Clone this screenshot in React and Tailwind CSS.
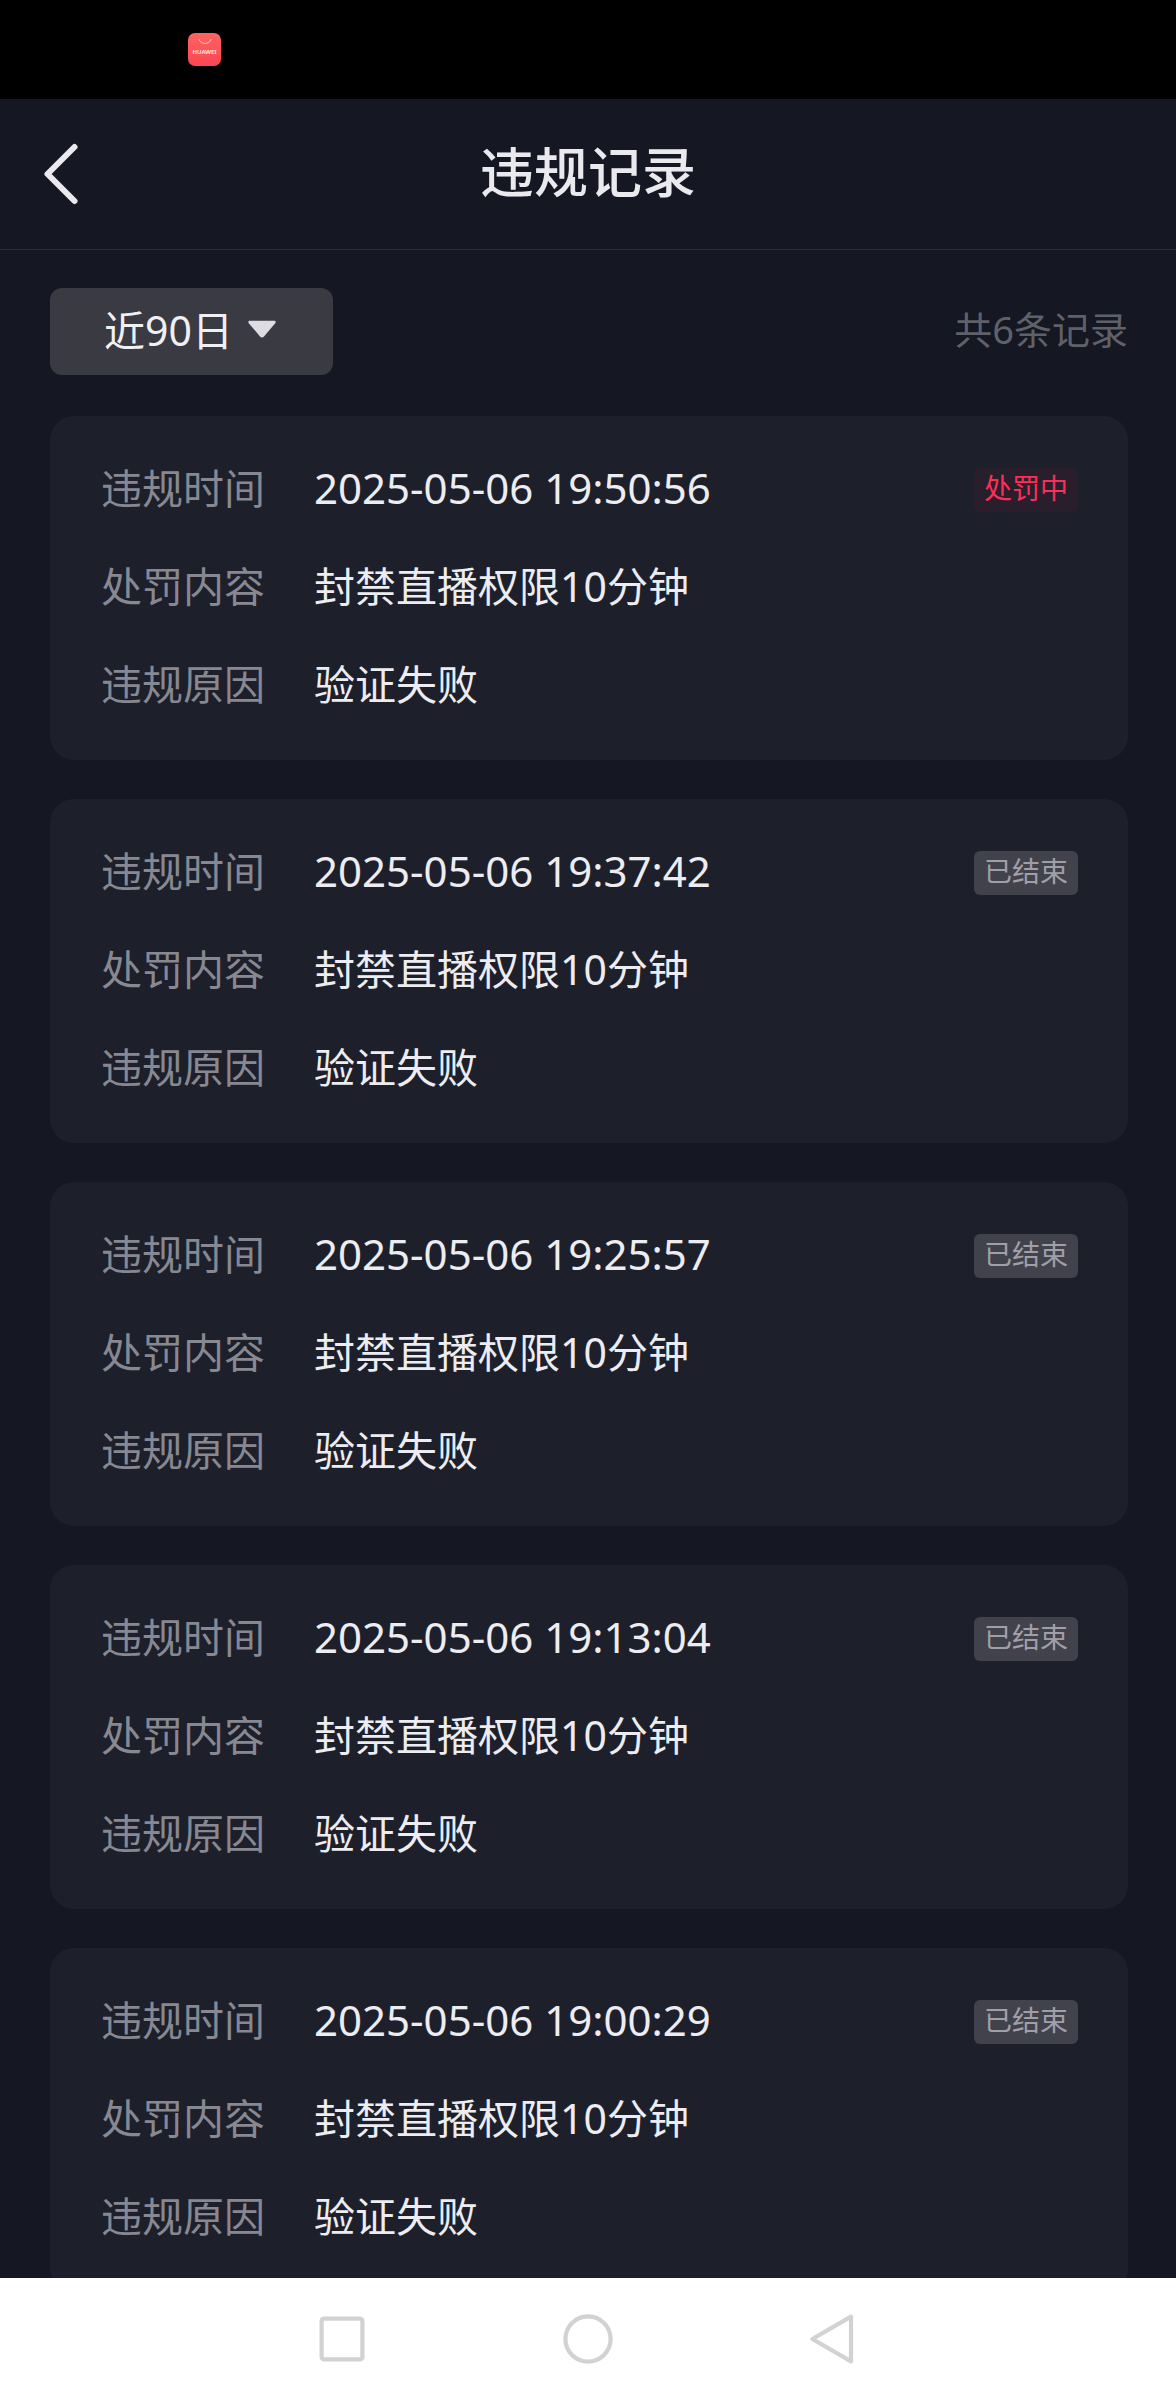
import React from "react";

const records = [
  { time: "2025-05-06 19:50:56", content: "封禁直播权限10分钟", reason: "验证失败", active: true },
  { time: "2025-05-06 19:37:42", content: "封禁直播权限10分钟", reason: "验证失败", active: false },
  { time: "2025-05-06 19:25:57", content: "封禁直播权限10分钟", reason: "验证失败", active: false },
  { time: "2025-05-06 19:13:04", content: "封禁直播权限10分钟", reason: "验证失败", active: false },
  { time: "2025-05-06 19:00:29", content: "封禁直播权限10分钟", reason: "验证失败", active: false },
];

function StatusBar() {
  return (
    <div className="flex h-[99px] shrink-0 items-center bg-black pl-[188px]">
      <div className="flex h-[33px] w-[33px] flex-col items-center rounded-[7px] bg-linear-to-b from-[#ff6361] to-[#fc4553] pt-[6px]">
        <svg width="14" height="6" viewBox="0 0 14 6" fill="none" aria-hidden="true">
          <path d="M1 0.5C2.4 5.8 11.6 5.8 13 0.5" stroke="#ffc4c0" strokeWidth="1" strokeLinecap="round" />
        </svg>
        <span className="mt-[3px] text-[6px] leading-[8px] font-semibold text-[#ffeceb]">HUAWEI</span>
      </div>
    </div>
  );
}

function Header() {
  return (
    <header className="grid h-[151px] shrink-0 grid-cols-[1fr_auto_1fr] items-center border-b border-[#2a2c36] px-[40px]">
      <button type="button" aria-label="返回" className="justify-self-start">
        <svg width="40" height="64" viewBox="0 0 40 64" fill="none" aria-hidden="true">
          <path d="M34.5 5L7.5 32L34.5 59" stroke="#e9e9ee" strokeWidth="6" strokeLinecap="round" strokeLinejoin="round" />
        </svg>
      </button>
      <h1 className="pb-[4px] text-[54px] leading-[72px] font-medium text-[#e9e9ee]">违规记录</h1>
    </header>
  );
}

function Filter() {
  return (
    <div className="flex items-center justify-between">
      <div className="relative">
        <select
          aria-label="时间范围"
          defaultValue="90"
          className="h-[87px] w-[283px] appearance-none rounded-[12px] bg-[#3a3a43] pb-[4px] pl-[54px] text-[41px] leading-[60px] text-[#f0f0f4]"
        >
          <option value="90">近90日</option>
        </select>
        <svg
          className="pointer-events-none absolute top-[32px] right-[57px]"
          width="28"
          height="18"
          viewBox="0 0 28 18"
          aria-hidden="true"
        >
          <path d="M2 0.8H26C27.6 0.8 28.2 2 27.2 3.2L16 16.4C14.8 17.8 13.2 17.8 12 16.4L0.8 3.2C-0.2 2 0.4 0.8 2 0.8Z" fill="#dcdce1" />
        </svg>
      </div>
      <p className="pb-[6px] text-[38px] leading-[60px] text-[#5f616a]">共6条记录</p>
    </div>
  );
}

function Row({ label, children }) {
  return (
    <div className="flex items-center">
      <dt className="w-[213px] shrink-0 text-[#878892]">{label}</dt>
      <dd className="flex grow items-center justify-between text-[#ececf1]">{children}</dd>
    </div>
  );
}

function Badge({ active }) {
  return active ? (
    <span className="mt-[4px] rounded-[6px] bg-[#291e2c] px-[10px] pb-[3px] text-[28px] leading-[41px] text-[#f92f58]">处罚中</span>
  ) : (
    <span className="mt-[4px] rounded-[6px] bg-[#42424c] px-[10px] pb-[3px] text-[28px] leading-[41px] text-[#a09fa8]">已结束</span>
  );
}

function RecordCard({ record }) {
  return (
    <li className="rounded-[24px] bg-[#1d202b] pt-[42px] pr-[50px] pb-[46px] pl-[51px]">
      <dl className="flex flex-col gap-[38px] text-[41px] leading-[60px]">
        <Row label="违规时间">
          <time className="text-[42px]">{record.time}</time>
          <Badge active={record.active} />
        </Row>
        <Row label="处罚内容">{record.content}</Row>
        <Row label="违规原因">{record.reason}</Row>
      </dl>
    </li>
  );
}

function NavBar() {
  return (
    <nav className="flex h-[122px] shrink-0 items-center justify-center gap-[190px] bg-white">
      <button type="button" aria-label="最近任务">
        <svg width="56" height="56" viewBox="0 0 56 56" fill="none" stroke="#d2d2d2" strokeWidth="4.2" aria-hidden="true">
          <rect x="7.6" y="7.6" width="40.8" height="40.8" rx="2.5" />
        </svg>
      </button>
      <button type="button" aria-label="主页">
        <svg width="56" height="56" viewBox="0 0 56 56" fill="none" stroke="#d2d2d2" strokeWidth="4.2" aria-hidden="true">
          <circle cx="28" cy="28" r="22.6" />
        </svg>
      </button>
      <button type="button" aria-label="返回上一页">
        <svg width="56" height="56" viewBox="0 0 56 56" fill="none" stroke="#d2d2d2" strokeWidth="4.2" strokeLinejoin="round" aria-hidden="true">
          <path d="M45 5.6V50.4L6.4 28Z" />
        </svg>
      </button>
    </nav>
  );
}

export default function App() {
  return (
    <div
      lang="zh-CN"
      className="flex h-screen flex-col bg-[#151722] font-['Noto_Sans','Noto_Sans_CJK_SC',sans-serif]"
    >
      <StatusBar />
      <Header />
      <main className="min-h-0 grow overflow-y-auto pt-[38px] pr-[48px] pl-[50px] [scrollbar-width:none]">
        <Filter />
        <ul className="mt-[41px] flex flex-col gap-[39px]">
          {records.map((record) => (
            <RecordCard key={record.time} record={record} />
          ))}
        </ul>
      </main>
      <NavBar />
    </div>
  );
}
